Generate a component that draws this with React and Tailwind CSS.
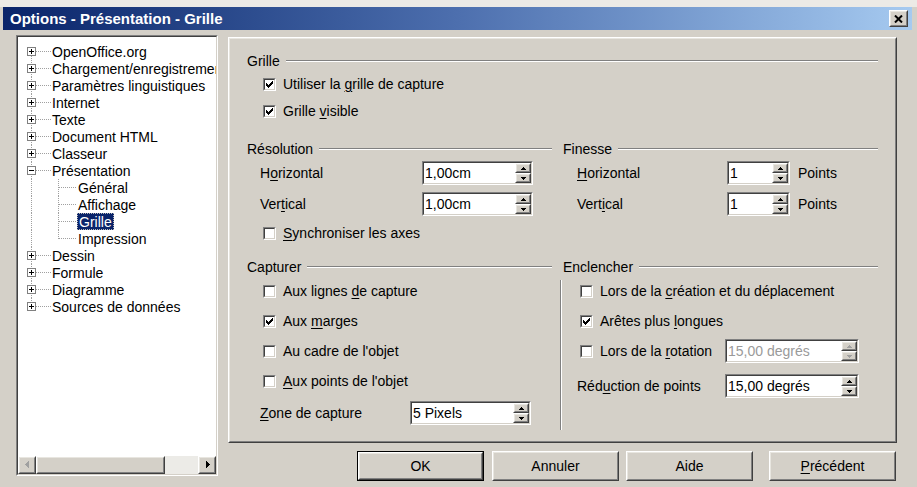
import React from 'react';

const sunkenO = "border border-t-[#808080] border-l-[#808080] border-b-white border-r-white";
const sunkenI = "border border-t-[#404040] border-l-[#404040] border-b-[#d4d0c8] border-r-[#d4d0c8]";
const raisedO = "border border-t-white border-l-white border-b-[#404040] border-r-[#404040]";
const raisedI = "border border-t-[#e8e6e0] border-l-[#e8e6e0] border-b-[#808080] border-r-[#808080]";

const M = ({ a = '', u, b = '' }) => (
  <>
    {a}
    <span className="underline decoration-1 underline-offset-[2px]">{u}</span>
    {b}
  </>
);

function CB({ checked }) {
  return (
    <span className={`w-[13px] h-[13px] shrink-0 flex ${sunkenO}`}>
      <span className={`flex-1 flex items-center justify-center bg-white ${sunkenI}`}>
        {checked && (
          <svg width="7" height="7" viewBox="0 0 7 7" shapeRendering="crispEdges">
            <rect x="6" y="0" width="1" height="1" fill="#000" />
            <rect x="5" y="1" width="2" height="1" fill="#000" />
            <rect x="0" y="2" width="1" height="1" fill="#000" />
            <rect x="4" y="2" width="3" height="1" fill="#000" />
            <rect x="0" y="3" width="2" height="1" fill="#000" />
            <rect x="3" y="3" width="3" height="1" fill="#000" />
            <rect x="0" y="4" width="5" height="1" fill="#000" />
            <rect x="1" y="5" width="3" height="1" fill="#000" />
            <rect x="2" y="6" width="1" height="1" fill="#000" />
          </svg>
        )}
      </span>
    </span>
  );
}

function CheckRow({ checked, children }) {
  return (
    <div className="h-[16px] flex items-center">
      <CB checked={checked} />
      <span className="ml-[7px] whitespace-nowrap">{children}</span>
    </div>
  );
}

function GroupHead({ label }) {
  return (
    <div className="h-[16px] flex items-center">
      <span className="whitespace-nowrap">{label}</span>
      <div className="flex-1 ml-[6px] h-[2px] border-t border-t-[#808080] border-b border-b-white" />
    </div>
  );
}

function Arrow({ dir, color }) {
  return (
    <svg width="5" height="3" viewBox="0 0 5 3" shapeRendering="crispEdges">
      {dir === 'up' ? (
        <>
          <rect x="2" y="0" width="1" height="1" fill={color} />
          <rect x="1" y="1" width="3" height="1" fill={color} />
          <rect x="0" y="2" width="5" height="1" fill={color} />
        </>
      ) : (
        <>
          <rect x="0" y="0" width="5" height="1" fill={color} />
          <rect x="1" y="1" width="3" height="1" fill={color} />
          <rect x="2" y="2" width="1" height="1" fill={color} />
        </>
      )}
    </svg>
  );
}

function SpinBtn({ dir, disabled }) {
  return (
    <div className={`flex-1 flex bg-[#d4d0c8] ${raisedO}`}>
      <div className={`flex-1 flex items-center justify-center ${raisedI}`}>
        <Arrow dir={dir} color={disabled ? '#a0a0a0' : '#000'} />
      </div>
    </div>
  );
}

function Spin({ w, value, disabled }) {
  return (
    <div className={`${w} h-[24px] shrink-0 flex ${sunkenO}`}>
      <div className={`flex-1 min-w-0 flex bg-white ${sunkenI}`}>
        <div className={`flex-1 min-w-0 flex items-center pl-[1px] whitespace-nowrap ${disabled ? 'text-[#9a9a9a]' : ''}`}>{value}</div>
        <div className="w-[16px] flex flex-col">
          <SpinBtn dir="up" disabled={disabled} />
          <SpinBtn dir="down" disabled={disabled} />
        </div>
      </div>
    </div>
  );
}

const tree = [
  { t: 'OpenOffice.org', first: true },
  { t: 'Chargement/enregistrement' },
  { t: 'Paramètres linguistiques' },
  { t: 'Internet' },
  { t: 'Texte' },
  { t: 'Document HTML' },
  { t: 'Classeur' },
  { t: 'Présentation', open: true },
  { t: 'Général', child: true },
  { t: 'Affichage', child: true },
  { t: 'Grille', child: true, sel: true },
  { t: 'Impression', child: true, lastChild: true },
  { t: 'Dessin' },
  { t: 'Formule' },
  { t: 'Diagramme' },
  { t: 'Sources de données', last: true },
];

function TreeRow({ r }) {
  const child = !!r.child;
  const W = child ? 60 : 34;
  const ln = { stroke: '#a0a0a0', strokeWidth: 1, strokeDasharray: '1 1' };
  return (
    <div className="h-[17px] flex items-center whitespace-nowrap">
      <svg width={W} height="17" className="shrink-0" shapeRendering="crispEdges">
        <line x1="13.5" x2="13.5" y1={r.first ? 8.5 : 0} y2={r.last ? 8.5 : 17} {...ln} />
        {!child && <line x1="18" x2="33" y1="8.5" y2="8.5" {...ln} />}
        {r.open && <line x1="40.5" x2="40.5" y1="13" y2="17" {...ln} />}
        {child && (
          <>
            <line x1="40.5" x2="40.5" y1="0" y2={r.lastChild ? 8.5 : 17} {...ln} />
            <line x1="41" x2="59" y1="8.5" y2="8.5" {...ln} />
          </>
        )}
        {!child && (
          <>
            <rect x="9.5" y="4.5" width="8" height="8" fill="#fff" stroke="#808080" strokeWidth="1" />
            <rect x="11" y="8" width="5" height="1" fill="#000" />
            {!r.open && <rect x="13" y="6" width="1" height="5" fill="#000" />}
          </>
        )}
      </svg>
      {r.sel ? (
        <span className="-ml-[1px] h-[17px] flex items-center px-[1px] bg-[#0a246a] text-white border border-dotted border-[#b8b8b8]">{r.t}</span>
      ) : (
        <span>{r.t}</span>
      )}
    </div>
  );
}

function Btn({ children, def, cls }) {
  return (
    <div className={`${cls} h-[30px] flex ${def ? 'border border-black' : ''}`}>
      <div className={`flex-1 flex ${raisedO}`}>
        <div className={`flex-1 flex items-center justify-center ${raisedI}`}>{children}</div>
      </div>
    </div>
  );
}

export default function App() {
  return (
    <div className="w-[917px] h-[487px] bg-[#d4d0c8] text-black text-[14px] leading-none font-['Liberation_Sans',Arial,sans-serif] overflow-hidden flex flex-col">
      <div className="h-[7px] shrink-0 bg-[#eceae6]" />
      <div className="h-[23px] shrink-0 ml-[3px] mr-[5px] flex items-center bg-linear-to-r from-[#0a246a] via-[#4d6fae] to-[#a6caf0]">
        <span className="ml-[7px] text-white font-bold text-[15px] whitespace-nowrap">Options - Présentation - Grille</span>
        <div className="flex-1" />
        <div className={`w-[19px] h-[17px] mr-[4px] flex bg-[#d4d0c8] ${raisedO}`}>
          <div className={`flex-1 flex items-center justify-center ${raisedI}`}>
            <svg width="9" height="8" viewBox="0 0 9 8">
              <path d="M1 0.5 L8 7.5 M8 0.5 L1 7.5" stroke="#000" strokeWidth="2" />
            </svg>
          </div>
        </div>
      </div>

      <div className="flex-1 flex items-start pl-[16px] pt-[5px]">
        {/* tree */}
        <div className={`w-[202px] h-[441px] shrink-0 flex ${sunkenO}`}>
          <div className={`flex-1 min-w-0 flex flex-col bg-white ${sunkenI}`}>
            <div className="flex-1 min-w-0 overflow-hidden pt-[6px] flex flex-col">
              {tree.map((r, i) => (
                <TreeRow key={i} r={r} />
              ))}
            </div>
            <div className="h-[18px] shrink-0 flex bg-[#d4d0c8]">
              <div className={`w-[18px] flex ${raisedO}`}>
                <div className={`flex-1 flex items-center justify-center ${raisedI}`}>
                  <svg width="5" height="8" viewBox="0 0 5 8" shapeRendering="crispEdges">
                    <path d="M4 0 L4 7 L0 3.5 Z" fill="#a0a0a0" />
                  </svg>
                </div>
              </div>
              <div className={`w-[129px] flex ${raisedO}`}>
                <div className={`flex-1 ${raisedI}`} />
              </div>
              <div className="flex-1 bg-[#ecebe7]" />
              <div className={`w-[18px] flex ${raisedO}`}>
                <div className={`flex-1 flex items-center justify-center ${raisedI}`}>
                  <svg width="5" height="8" viewBox="0 0 5 8" shapeRendering="crispEdges">
                    <path d="M1 0 L1 7 L4.5 3.5 Z" fill="#000" />
                  </svg>
                </div>
              </div>
            </div>
          </div>
        </div>

        {/* right side */}
        <div className="ml-[10px] mt-[2px] w-[669px] flex flex-col">
          <div className="h-[406px] flex border border-t-white border-l-white border-b-[#404040] border-r-[#404040]">
            <div className="flex-1 flex flex-col border border-t-[#e8e6e0] border-l-[#e8e6e0] border-b-[#808080] border-r-[#808080] pl-[17px] pr-[17px] pt-[14px]">
              <GroupHead label="Grille" />
              <div className="ml-[16px] mt-[7px]">
                <CheckRow checked>
                  <M a="Utiliser la " u="g" b="rille de capture" />
                </CheckRow>
              </div>
              <div className="ml-[16px] mt-[11px]">
                <CheckRow checked>
                  <M a="Grille " u="v" b="isible" />
                </CheckRow>
              </div>

              <div className="flex mt-[22px]">
                <div className="w-[305px] flex flex-col">
                  <GroupHead label="Résolution" />
                  <div className="mt-[4px] h-[24px] flex items-center">
                    <span className="ml-[13px] w-[162px] shrink-0">
                      <M a="H" u="o" b="rizontal" />
                    </span>
                    <Spin w="w-[111px]" value="1,00cm" />
                  </div>
                  <div className="mt-[7px] h-[24px] flex items-center">
                    <span className="ml-[13px] w-[162px] shrink-0">
                      <M a="Ver" u="t" b="ical" />
                    </span>
                    <Spin w="w-[111px]" value="1,00cm" />
                  </div>
                  <div className="ml-[16px] mt-[9px]">
                    <CheckRow>
                      <M u="S" b="ynchroniser les axes" />
                    </CheckRow>
                  </div>
                </div>
                <div className="w-[315px] ml-[11px] flex flex-col">
                  <GroupHead label="Finesse" />
                  <div className="mt-[4px] h-[24px] flex items-center">
                    <span className="ml-[14px] w-[150px] shrink-0">
                      <M u="H" b="orizontal" />
                    </span>
                    <Spin w="w-[63px]" value="1" />
                    <span className="ml-[8px]">Points</span>
                  </div>
                  <div className="mt-[7px] h-[24px] flex items-center">
                    <span className="ml-[14px] w-[150px] shrink-0">
                      <M a="Vert" u="i" b="cal" />
                    </span>
                    <Spin w="w-[63px]" value="1" />
                    <span className="ml-[8px]">Points</span>
                  </div>
                </div>
              </div>

              <div className="flex mt-[18px]">
                <div className="w-[305px] flex flex-col">
                  <GroupHead label="Capturer" />
                  <div className="ml-[16px] mt-[8px]">
                    <CheckRow>
                      <M a="Aux lignes " u="d" b="e capture" />
                    </CheckRow>
                  </div>
                  <div className="ml-[16px] mt-[14px]">
                    <CheckRow checked>
                      <M a="Aux " u="m" b="arges" />
                    </CheckRow>
                  </div>
                  <div className="ml-[16px] mt-[14px]">
                    <CheckRow>Au cadre de l'objet</CheckRow>
                  </div>
                  <div className="ml-[16px] mt-[14px]">
                    <CheckRow>
                      <M u="A" b="ux points de l'objet" />
                    </CheckRow>
                  </div>
                  <div className="mt-[12px] h-[24px] flex items-center">
                    <span className="ml-[13px] w-[150px] shrink-0">
                      <M u="Z" b="one de capture" />
                    </span>
                    <Spin w="w-[121px]" value="5 Pixels" />
                  </div>
                </div>
                <div className="w-[11px] shrink-0 flex">
                  <div className="ml-[8px] mt-[21px] h-[150px] w-[2px] border-l border-l-[#808080] border-r border-r-white" />
                </div>
                <div className="w-[315px] flex flex-col">
                  <GroupHead label="Enclencher" />
                  <div className="ml-[17px] mt-[8px]">
                    <CheckRow>
                      <M a="Lors de la " u="c" b="réation et du déplacement" />
                    </CheckRow>
                  </div>
                  <div className="ml-[17px] mt-[14px]">
                    <CheckRow checked>
                      <M a="Arêtes plus " u="l" b="ongues" />
                    </CheckRow>
                  </div>
                  <div className="ml-[17px] mt-[10px] h-[24px] flex items-center">
                    <CB />
                    <span className="ml-[7px] w-[125px] shrink-0 whitespace-nowrap">
                      <M a="Lors de la " u="r" b="otation" />
                    </span>
                    <Spin w="w-[134px]" value="15,00 degrés" disabled />
                  </div>
                  <div className="mt-[11px] h-[24px] flex items-center">
                    <span className="ml-[14px] w-[148px] shrink-0 whitespace-nowrap">
                      <M a="Réd" u="u" b="ction de points" />
                    </span>
                    <Spin w="w-[134px]" value="15,00 degrés" />
                  </div>
                </div>
              </div>
            </div>
          </div>

          <div className="mt-[8px] flex">
            <Btn def cls="ml-[129px] w-[127px]">OK</Btn>
            <Btn cls="ml-[8px] w-[127px]">Annuler</Btn>
            <Btn cls="ml-[7px] w-[127px]">Aide</Btn>
            <Btn cls="ml-[16px] w-[127px]">
              <M u="P" b="récédent" />
            </Btn>
          </div>
        </div>
      </div>
    </div>
  );
}
